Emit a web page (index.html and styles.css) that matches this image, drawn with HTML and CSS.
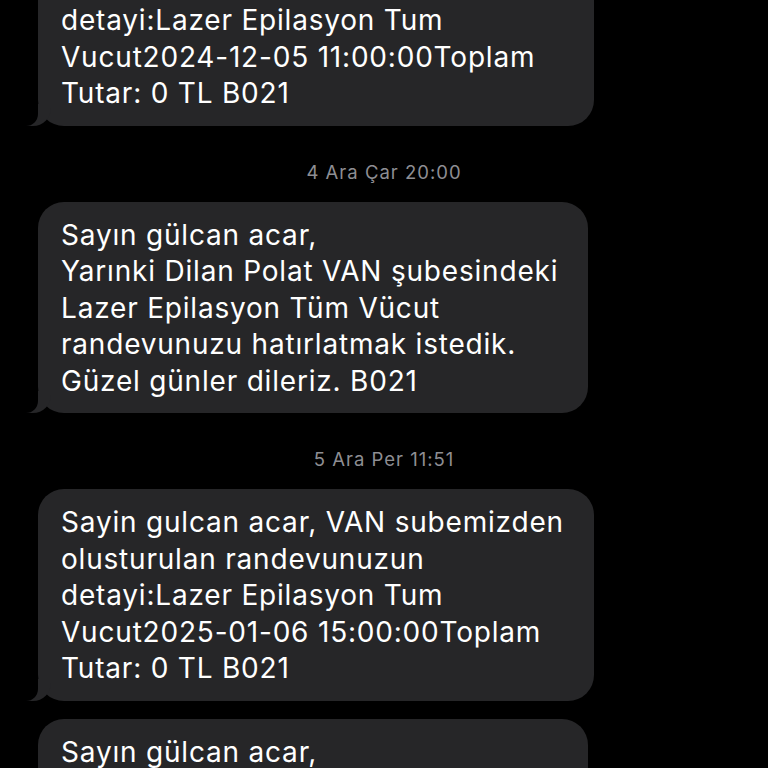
FILE: index.html
```html
<!DOCTYPE html>
<html lang="tr">

<head>
    <meta charset="UTF-8">
    <meta name="viewport" content="width=device-width, initial-scale=1.0">
    <title>Mesajlar</title>
    <link rel="stylesheet" href="styles.css">
</head>

<body>
    <div class="thread">
        <div class="bubble">
            Sayin gulcan acar, VAN subemizden<br>
            olusturulan randevunuzun<br>
            detayi:Lazer Epilasyon Tum<br>
            Vucut2024-12-05 11:00:00Toplam<br>
            Tutar: 0 TL B021
        </div>

        <div class="stamp">4 Ara Çar 20:00</div>

        <div class="bubble">
            Sayın gülcan acar,<br>
            Yarınki Dilan Polat VAN şubesindeki<br>
            Lazer Epilasyon Tüm Vücut<br>
            randevunuzu hatırlatmak istedik.<br>
            Güzel günler dileriz. B021
        </div>

        <div class="stamp">5 Ara Per 11:51</div>

        <div class="bubble">
            Sayin gulcan acar, VAN subemizden<br>
            olusturulan randevunuzun<br>
            detayi:Lazer Epilasyon Tum<br>
            Vucut2025-01-06 15:00:00Toplam<br>
            Tutar: 0 TL B021
        </div>

        <div class="bubble next">
            Sayın gülcan acar,<br>
            Yarınki Dilan Polat VAN şubesindeki<br>
            Lazer Epilasyon Tüm Vücut<br>
            randevunuzu hatırlatmak istedik.<br>
            Güzel günler dileriz. B021
        </div>
    </div>
</body>

</html>
```

FILE: styles.css
```css
body {
    margin: 0;
    background-color: #000;
    font-family: Inter, "Noto Sans", sans-serif;
    overflow: hidden;
}

.thread {
    display: flex;
    flex-direction: column;
    align-items: flex-start;
    padding-left: 38px;
    /* page is scrolled, first bubble starts above the top */
    margin-top: -86px;
}

.bubble {
    position: relative;
    box-sizing: border-box;
    padding: 15px 30px 14px 23px;
    border-radius: 26px;
    background-color: #262628;
    color: #fff;
    font-size: 28px;
    line-height: 36.5px;
    letter-spacing: 0.8px;
    white-space: nowrap;
}

/* tail on the bottom left */
.bubble::before {
    content: "";
    position: absolute;
    bottom: 0;
    left: -13px;
    width: 26px;
    height: 22px;
    background-color: #262628;
    border-bottom-right-radius: 18px;
}

.bubble::after {
    content: "";
    position: absolute;
    bottom: 0;
    left: -17px;
    width: 17px;
    height: 22px;
    background-color: #000;
    border-bottom-right-radius: 12px;
}

.next {
    margin-top: 18px;
}

.stamp {
    align-self: center;
    margin: 35px 0 19px -38px;
    color: #8e8e93;
    font-size: 18.5px;
    line-height: 22px;
    letter-spacing: 1px;
}
```
